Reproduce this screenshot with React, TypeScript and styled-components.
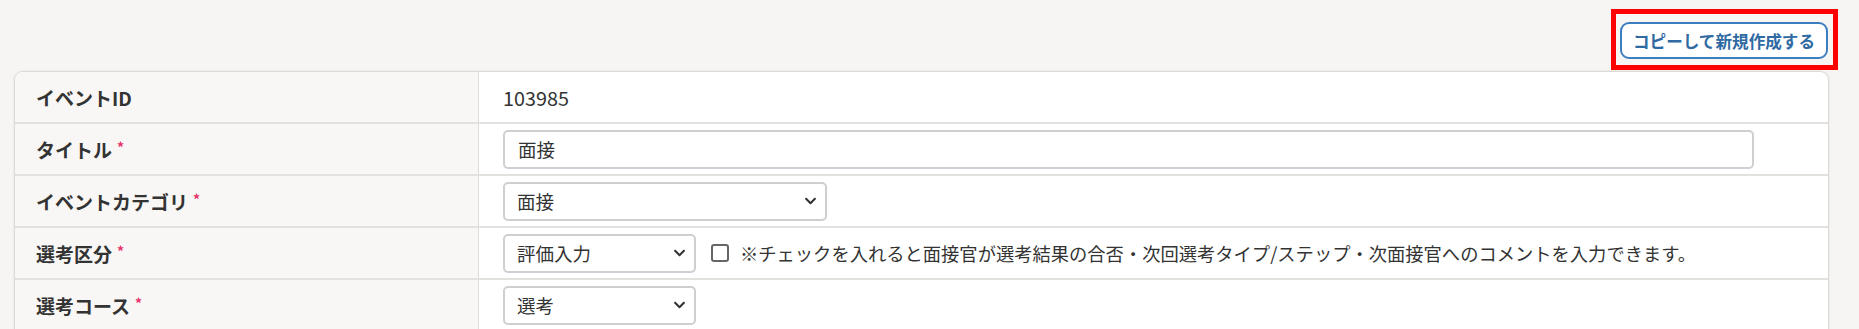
import React from "react";
import styled, { createGlobalStyle } from "styled-components";
import { FaChevronDown } from "react-icons/fa";

const GlobalStyle = createGlobalStyle`
  body {
    margin: 0;
    background: #f6f5f3;
    font-family: "Noto Sans CJK JP", "Noto Sans", sans-serif;
    color: #333;
  }
`;

type Field = {
  label: string;
  required?: boolean;
  kind: "text" | "input" | "select";
  value: string;
  width?: number;
  note?: string;
};

const fields: Field[] = [
  { label: "イベントID", kind: "text", value: "103985" },
  { label: "タイトル", required: true, kind: "input", value: "面接" },
  { label: "イベントカテゴリ", required: true, kind: "select", value: "面接", width: 324 },
  {
    label: "選考区分",
    required: true,
    kind: "select",
    value: "評価入力",
    width: 193,
    note: "※チェックを入れると面接官が選考結果の合否・次回選考タイプ/ステップ・次面接官へのコメントを入力できます。",
  },
  { label: "選考コース", required: true, kind: "select", value: "選考", width: 193 },
];

const App: React.FC = () => {
  return (
    <Page>
      <GlobalStyle />
      <StyledHeader>
        <StyledHighlight>
          <CopyButton type="button">コピーして新規作成する</CopyButton>
        </StyledHighlight>
      </StyledHeader>

      <StyledTable>
        {fields.map((f) => (
          <StyledRow key={f.label}>
            <StyledLabel>
              {f.label}
              {f.required && <StyledStar>*</StyledStar>}
            </StyledLabel>
            <StyledValue>
              {f.kind === "text" && <PlainValue>{f.value}</PlainValue>}
              {f.kind === "input" && <TextInput defaultValue={f.value} />}
              {f.kind === "select" && (
                <SelectWrap $width={f.width || 200}>
                  <StyledSelect defaultValue={f.value}>
                    <option>{f.value}</option>
                  </StyledSelect>
                  <Chevron>
                    <FaChevronDown />
                  </Chevron>
                </SelectWrap>
              )}
              {f.note && (
                <NoteLabel>
                  <Checkbox type="checkbox" />
                  <span>{f.note}</span>
                </NoteLabel>
              )}
            </StyledValue>
          </StyledRow>
        ))}
      </StyledTable>
    </Page>
  );
};

const Page = styled.div`
  min-height: 329px;
  background: #f6f5f3;
`;

const StyledHeader = styled.div`
  display: flex;
  justify-content: flex-end;
  padding: 9px 21px 0 0;
  height: 71px;
  box-sizing: border-box;
`;

const StyledHighlight = styled.div`
  display: flex;
  align-items: flex-start;
  border: 5px solid #ff0000;
  padding: 8px 5px 0 4px;
  height: 61px;
  box-sizing: border-box;
`;

const CopyButton = styled.button`
  width: 208px;
  height: 37px;
  background: #fff;
  border: 2px solid #3b7fc0;
  border-radius: 9px;
  color: #2f6aa3;
  font-family: "Noto Sans CJK JP", sans-serif;
  font-size: 16.6px;
  font-weight: 700;
  padding: 0;
  cursor: pointer;
`;

const StyledTable = styled.div`
  margin: 0 30px 0 14px;
  border: 1px solid #dcdad7;
  border-bottom: none;
  border-radius: 9px 9px 0 0;
  overflow: hidden;
  background: #fff;
  box-shadow: 0 0 3px rgba(0, 0, 0, 0.08);
`;

const StyledRow = styled.div`
  display: grid;
  grid-template-columns: 464px 1fr;
  height: 52px;
  box-sizing: border-box;
  border-bottom: 2px solid #e3e1de;
`;

const StyledLabel = styled.div`
  display: flex;
  align-items: center;
  padding-left: 21px;
  background: #f8f7f5;
  border-right: 1px solid #dedcd9;
  font-size: 19px;
  font-weight: 700;
  color: #333;
`;

const StyledStar = styled.span`
  color: #e8336a;
  font-size: 14px;
  font-weight: 700;
  margin-left: 5px;
  align-self: flex-start;
  margin-top: 13px;
`;

const StyledValue = styled.div`
  display: flex;
  align-items: center;
  padding-left: 24px;
  font-size: 18px;
  color: #333;
`;

const PlainValue = styled.span`
  font-size: 19.8px;
`;

const TextInput = styled.input`
  width: 1251px;
  height: 39px;
  box-sizing: border-box;
  border: 2px solid #cfcfcf;
  border-radius: 5px;
  padding: 0 13px;
  font-family: "Noto Sans CJK JP", sans-serif;
  font-size: 18.5px;
  color: #333;
  outline: none;
`;

const SelectWrap = styled.div<{ $width: number }>`
  position: relative;
  width: ${(p) => p.$width}px;
  height: 39px;
`;

const StyledSelect = styled.select`
  appearance: none;
  width: 100%;
  height: 100%;
  box-sizing: border-box;
  border: 2px solid #cfcfcf;
  border-radius: 5px;
  background: #fff;
  padding: 0 30px 0 12px;
  font-family: "Noto Sans CJK JP", sans-serif;
  font-size: 18.5px;
  color: #333;
  outline: none;
`;

const Chevron = styled.span`
  position: absolute;
  right: 10px;
  top: 50%;
  transform: translateY(-50%);
  display: flex;
  font-size: 13px;
  color: #333;
  pointer-events: none;
`;

const NoteLabel = styled.label`
  display: flex;
  align-items: center;
  margin-left: 15px;
  font-size: 18.3px;
  color: #333;
`;

const Checkbox = styled.input`
  appearance: none;
  width: 18px;
  height: 18px;
  margin: 0 11px 0 0;
  border: 2px solid #666;
  border-radius: 3px;
  background: #fff;
  box-sizing: border-box;
`;

export default App;
